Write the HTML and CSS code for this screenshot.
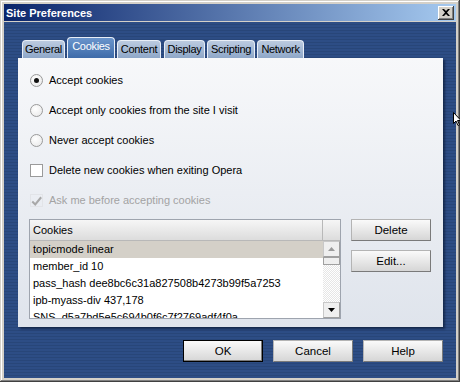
FILE: index.html
```html
<!DOCTYPE html>
<html lang="en">

<head>
    <meta charset="UTF-8">
    <title>Site Preferences</title>
    <link rel="stylesheet" href="styles.css">
</head>

<body>
    <div class="window">
        <div class="titlebar">
            <span class="title">Site Preferences</span>
            <span class="close">
                <svg width="8" height="7" viewBox="0 0 8 7"><path d="M0 0h2l2 2 2-2h2L5 3.5 8 7H6L4 5 2 7H0l3-3.5z" fill="#000"/></svg>
            </span>
        </div>
        <div class="client">
            <div class="tabs">
                <div class="tab tab-general">General</div>
                <div class="tab tab-cookies active">Cookies</div>
                <div class="tab tab-content">Content</div>
                <div class="tab tab-display">Display</div>
                <div class="tab tab-scripting">Scripting</div>
                <div class="tab tab-network">Network</div>
            </div>
            <div class="panel">
                <div class="options">
                    <div class="opt"><span class="radio checked"></span>Accept cookies</div>
                    <div class="opt"><span class="radio"></span>Accept only cookies from the site I visit</div>
                    <div class="opt"><span class="radio"></span>Never accept cookies</div>
                    <div class="opt"><span class="check"></span>Delete new cookies when exiting Opera</div>
                    <div class="opt disabled">
                        <span class="check off">
                            <svg width="13" height="13" viewBox="0 0 13 13"><path d="M1.5 6.5l3.5 3.5 7-8.5" stroke="#a8a8a8" stroke-width="2.4" fill="none"/></svg>
                        </span>Ask me before accepting cookies
                    </div>
                </div>
                <div class="cookies">
                    <div class="list">
                        <div class="list-head">
                            <span class="col">Cookies</span>
                            <span class="col-end"></span>
                        </div>
                        <div class="list-body">
                            <div class="rows">
                                <div class="row sel">topicmode linear</div>
                                <div class="row">member_id 10</div>
                                <div class="row">pass_hash dee8bc6c31a827508b4273b99f5a7253</div>
                                <div class="row">ipb-myass-div 437,178</div>
                                <div class="row">SNS_d5a7bd5e5c694b0f6c7f2769adf4f0a</div>
                            </div>
                            <div class="scrollbar">
                                <span class="sb-btn"><svg width="7" height="4" viewBox="0 0 7 4"><path d="M0 4h7L3.5 0z" fill="#9a9a9a"/></svg></span>
                                <span class="thumb"></span>
                                <span class="track"></span>
                                <span class="sb-btn"><svg width="7" height="4" viewBox="0 0 7 4"><path d="M0 0h7L3.5 4z" fill="#000"/></svg></span>
                            </div>
                        </div>
                    </div>
                    <div class="side">
                        <button class="btn">Delete</button>
                        <button class="btn">Edit...</button>
                    </div>
                </div>
            </div>
            <div class="actions">
                <button class="btn default">OK</button>
                <button class="btn">Cancel</button>
                <button class="btn">Help</button>
            </div>
        </div>
        <svg class="cursor" width="8" height="14" viewBox="0 0 8 14"><path d="M0.5 0.5v11l2.5-2.5 2 4.5 1.5-.7-2-4.3h3.5z" fill="#fff" stroke="#000"/></svg>
    </div>
</body>

</html>
```

FILE: styles.css
```css
* {
    box-sizing: border-box;
}

body {
    margin: 0;
    font-family: "Liberation Sans", Arial, sans-serif;
    font-size: 11px;
    color: #000;
    background: #3a3a3a;
}

.window {
    position: relative;
    width: 460px;
    height: 382px;
    padding: 4px;
    background: #d4d0c8;
    box-shadow: inset -1px -1px #404040, inset 1px 1px #d4d0c8, inset -2px -2px #808080, inset 2px 2px #fff;
    display: flex;
    flex-direction: column;
}

.titlebar {
    height: 17px;
    margin-bottom: 1px;
    display: flex;
    align-items: center;
    justify-content: space-between;
    padding: 0 2px 0 2px;
    background: linear-gradient(to right, #0a246a, #a6caf0);
}

.title {
    color: #fff;
    font-weight: bold;
    font-size: 11px;
}

.close {
    width: 16px;
    height: 14px;
    background: #d4d0c8;
    display: flex;
    align-items: center;
    justify-content: center;
    box-shadow: inset -1px -1px #404040, inset 1px 1px #fff, inset -2px -2px #808080;
}

.client {
    flex: 1;
    padding: 15px 13px 0 14px;
    background: repeating-linear-gradient(to bottom, #2d4d85 0 2px, #284679 2px 3px);
}

.tabs {
    height: 21px;
    display: flex;
    align-items: flex-end;
    gap: 2px;
    padding-left: 4px;
}

.tab {
    height: 18px;
    padding-top: 2px;
    border: 1px solid #e8eef7;
    border-bottom: none;
    border-radius: 4px 4px 0 0;
    background: linear-gradient(to bottom, #bccbe0, #8ea7c8);
    color: #000;
    font-size: 11px;
    letter-spacing: -0.3px;
    text-align: center;
    white-space: nowrap;
}

.tab.active {
    height: 21px;
    padding-top: 2px;
    color: #fff;
    background: linear-gradient(to bottom, #6a95cc, #3e6ba9);
}

.tab-general { width: 43px; }
.tab-cookies { width: 48px; }
.tab-content { width: 44px; }
.tab-display { width: 41px; margin-left: 1px; }
.tab-scripting { width: 48px; }
.tab-network { width: 47px; }

.panel {
    height: 269px;
    padding: 7px 11px 8px 11px;
    background: linear-gradient(to bottom, #f7f8fa, #dfe4ec);
    box-shadow: 2px 2px 2px rgba(8, 20, 45, 0.6);
}

.options {
    display: flex;
    flex-direction: column;
}

.opt {
    height: 30px;
    display: flex;
    align-items: center;
    gap: 6px;
    padding-left: 1px;
}

.opt.disabled {
    color: #a3a3a3;
}

.radio {
    width: 13px;
    height: 13px;
    border-radius: 50%;
    border: 1px solid #9a9a9a;
    background: radial-gradient(circle at 40% 35%, #fff, #e6e6e6);
    display: flex;
    align-items: center;
    justify-content: center;
}

.radio.checked::after {
    content: "";
    width: 5px;
    height: 5px;
    border-radius: 50%;
    background: #111;
}

.check {
    width: 13px;
    height: 13px;
    border: 1px solid #9a9a9a;
    background: #fff;
    display: flex;
}

.check.off {
    border-color: #e2e4e8;
    background: none;
}

.cookies {
    margin-top: 4px;
    display: flex;
    gap: 10px;
}

.list {
    width: 312px;
    height: 100px;
    border: 1px solid #9ea4ae;
    background: #fff;
    display: flex;
    flex-direction: column;
}

.list-head {
    height: 21px;
    display: flex;
    background: linear-gradient(to bottom, #f6f6f6, #dcdcdc);
    border-bottom: 1px solid #b8b8b8;
}

.col {
    flex: 1;
    padding: 4px 0 0 3px;
    border-right: 1px solid #b8b8b8;
}

.col-end {
    width: 17px;
}

.list-body {
    flex: 1;
    display: flex;
    overflow: hidden;
}

.rows {
    flex: 1;
    overflow: hidden;
}

.row {
    height: 17px;
    padding: 2px 0 0 3px;
    white-space: nowrap;
}

.row.sel {
    background: #d4d0c8;
}

.scrollbar {
    width: 17px;
    display: flex;
    flex-direction: column;
    background: repeating-conic-gradient(#e6e6e6 0 25%, #fff 0 50%) 0 0 / 2px 2px;
}

.sb-btn {
    height: 16px;
    display: flex;
    align-items: center;
    justify-content: center;
    background: #efefef;
    border: 1px solid #c8c8c8;
    border-right-color: #a0a0a0;
    border-bottom-color: #a0a0a0;
}

.thumb {
    height: 8px;
    background: #efefef;
    border: 1px solid #a0a0a0;
}

.track {
    flex: 1;
}

.side {
    display: flex;
    flex-direction: column;
    gap: 9px;
}

.btn {
    width: 80px;
    height: 22px;
    font-family: "Liberation Sans", Arial, sans-serif;
    font-size: 11.5px;
    color: #000;
    background: linear-gradient(to bottom, #fafafa, #d6d6d6);
    border: 1px solid #b4b4b4;
    border-right-color: #7a7a7a;
    border-bottom-color: #7a7a7a;
    padding: 0;
}

.btn.default {
    border: 1px solid #000;
    box-shadow: inset -1px -1px #7a7a7a;
}

.actions {
    display: flex;
    justify-content: flex-end;
    gap: 10px;
    padding-top: 13px;
}

.cursor {
    position: absolute;
    left: 453px;
    top: 112px;
}
```
